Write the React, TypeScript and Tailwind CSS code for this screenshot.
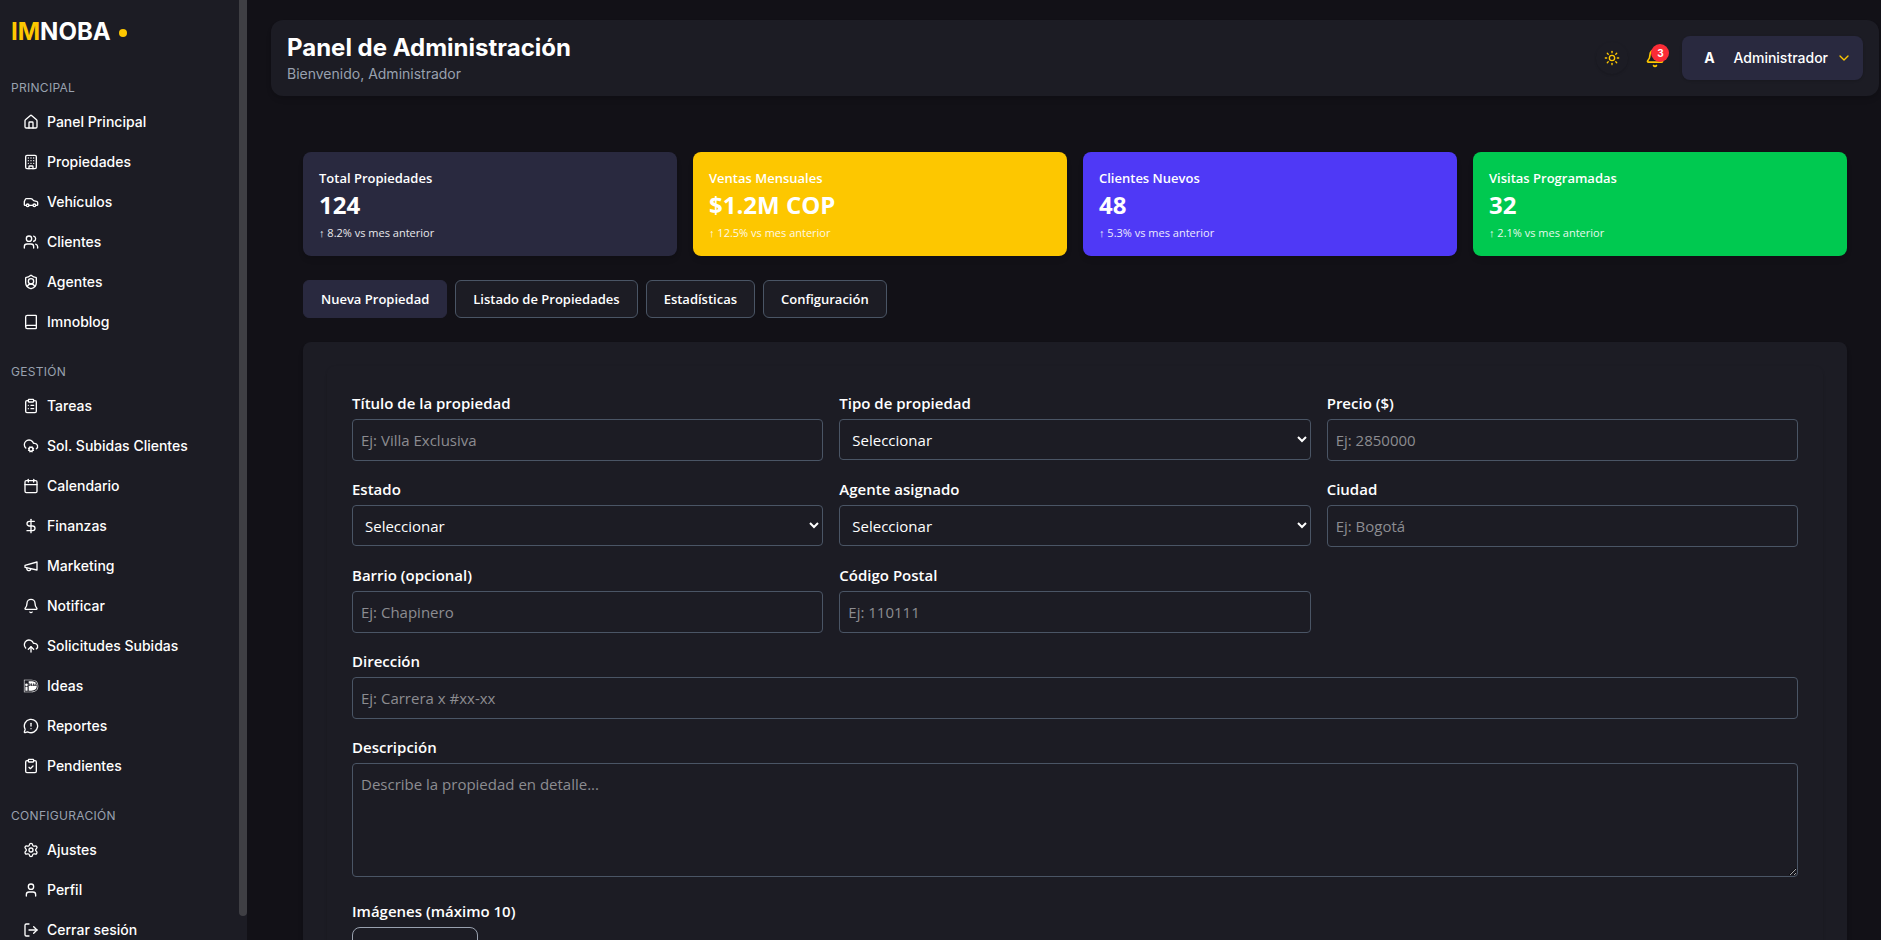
import React from "react";
import {
  House, Building, Car, Users, ShieldUser, Book, ClipboardList, CloudCog, Calendar, DollarSign,
  Bell, CloudUpload, MessageCircleWarning, ClipboardCheck, Settings, User, LogOut, Sun, ChevronDown,
} from "lucide-react";
import { FaIdeal } from "react-icons/fa6";

type IconType = React.ComponentType<{ className?: string }>;

function Megaphone({ className }: { className?: string }) {
  return (
    <svg viewBox="0 0 24 24" fill="none" stroke="currentColor" strokeWidth="2" strokeLinecap="round" strokeLinejoin="round" className={className} aria-hidden="true">
      <path d="m3 11 18-5v12L3 14v-3z" />
      <path d="M11.6 16.8a3 3 0 1 1-5.8-1.6" />
    </svg>
  );
}

const sections: { title: string; items: { label: string; icon: IconType }[] }[] = [
  {
    title: "PRINCIPAL",
    items: [
      { label: "Panel Principal", icon: House },
      { label: "Propiedades", icon: Building },
      { label: "Vehículos", icon: Car },
      { label: "Clientes", icon: Users },
      { label: "Agentes", icon: ShieldUser },
      { label: "Imnoblog", icon: Book },
    ],
  },
  {
    title: "GESTIÓN",
    items: [
      { label: "Tareas", icon: ClipboardList },
      { label: "Sol. Subidas Clientes", icon: CloudCog },
      { label: "Calendario", icon: Calendar },
      { label: "Finanzas", icon: DollarSign },
      { label: "Marketing", icon: Megaphone },
      { label: "Notificar", icon: Bell },
      { label: "Solicitudes Subidas", icon: CloudUpload },
      { label: "Ideas", icon: FaIdeal },
      { label: "Reportes", icon: MessageCircleWarning },
      { label: "Pendientes", icon: ClipboardCheck },
    ],
  },
  {
    title: "CONFIGURACIÓN",
    items: [
      { label: "Ajustes", icon: Settings },
      { label: "Perfil", icon: User },
      { label: "Cerrar sesión", icon: LogOut },
    ],
  },
];

const stats = [
  { title: "Total Propiedades", value: "124", delta: "8.2%", color: "bg-[#29293f]" },
  { title: "Ventas Mensuales", value: "$1.2M COP", delta: "12.5%", color: "bg-[#fdc700]" },
  { title: "Clientes Nuevos", value: "48", delta: "5.3%", color: "bg-[#4f39f6]" },
  { title: "Visitas Programadas", value: "32", delta: "2.1%", color: "bg-[#00c950]" },
];

const tabs = ["Nueva Propiedad", "Listado de Propiedades", "Estadísticas", "Configuración"];

function Sidebar() {
  return (
    <aside className="flex w-[247px] shrink-0 overflow-hidden bg-[#1c1c24] font-[Inter,sans-serif]">
      <div className="min-w-0 flex-1 px-[11px] py-4">
        <div className="mb-8 flex items-center gap-2 text-2xl font-bold text-white">
          <span><span className="text-[#fdc700]">IM</span>NOBA</span>
          <span className="mt-0.5 size-2 rounded-full bg-[#fdc700]" />
        </div>
        <nav className="flex flex-col gap-6">
          {sections.map((s) => (
            <div key={s.title}>
              <h2 className="mb-2 text-xs tracking-wide text-[#99a1af]">{s.title}</h2>
              <ul className="flex flex-col gap-1">
                {s.items.map(({ label, icon: Icon }) => (
                  <li key={label}>
                    <a href="#" className="flex h-9 items-center gap-2 rounded-lg px-3 text-sm font-medium text-white">
                      <Icon className="size-4 shrink-0" />
                      {label}
                    </a>
                  </li>
                ))}
              </ul>
            </div>
          ))}
        </nav>
      </div>
      <div className="flex w-2 flex-col">
        <div className="mb-6 flex-1 rounded-b bg-[#3f3f44]" />
      </div>
    </aside>
  );
}

function Header() {
  return (
    <header className="mr-0.5 flex items-center justify-between rounded-xl bg-[#1c1c24] px-4 py-3 font-[Inter,sans-serif] shadow-md">
      <div>
        <h1 className="text-2xl font-bold text-white">Panel de Administración</h1>
        <p className="text-sm text-[#99a1af]">Bienvenido, Administrador</p>
      </div>
      <div className="flex items-center gap-4">
        <button aria-label="Cambiar tema" className="flex size-8 items-center justify-center rounded-full text-[#fdc700] shadow-sm">
          <Sun className="size-4" />
        </button>
        <button aria-label="Notificaciones" className="relative p-px text-[#fdc700]">
          <Bell className="size-5" />
          <span className="absolute -top-[3px] left-[7px] flex size-[18px] items-center justify-center rounded-full bg-[#fb2c36] text-[10px] font-bold text-white">3</span>
        </button>
        <button className="flex h-11 items-center gap-2 rounded-lg bg-[#29293f] px-[11px] text-sm font-medium text-white shadow-sm">
          <span className="w-8 text-center font-bold">A</span>
          Administrador
          <ChevronDown className="size-4 text-[#fdc700]" />
        </button>
      </div>
    </header>
  );
}

const fieldClass = "block w-full rounded border border-[#4a5565] bg-transparent p-2 text-[15px] leading-6 text-white placeholder:text-[#8c8c91]";

function Field({ id, label, wide, children }: { id: string; label: string; wide?: boolean; children: React.ReactNode }) {
  return (
    <div className={wide ? "col-span-3" : ""}>
      <label htmlFor={id} className="mb-1 block text-[15px] leading-6 font-semibold text-white">{label}</label>
      {children}
    </div>
  );
}

function TextField({ id, label, placeholder, wide }: { id: string; label: string; placeholder: string; wide?: boolean }) {
  return (
    <Field id={id} label={label} wide={wide}>
      <input id={id} type="text" placeholder={placeholder} className={fieldClass} />
    </Field>
  );
}

function SelectField({ id, label }: { id: string; label: string }) {
  return (
    <Field id={id} label={label}>
      <select id={id} className="block h-[41px] w-full rounded border border-[#4a5565] bg-[#1c1c24] p-2 text-[15px] text-white">
        <option>Seleccionar</option>
      </select>
    </Field>
  );
}

export default function App() {
  return (
    <div className="flex h-screen overflow-hidden bg-[#121117] font-['Open_Sans',sans-serif] text-white">
      <Sidebar />
      <div className="min-w-0 flex-1 overflow-hidden pt-5 pl-6">
        <Header />
        <main className="py-14 pr-[34px] pl-8">
          <section className="grid grid-cols-4 gap-4">
            {stats.map((s) => (
              <article key={s.title} className={`rounded-lg px-4 pt-4 pb-[15px] shadow-md ${s.color}`}>
                <h3 className="text-[13px] leading-5 font-semibold">{s.title}</h3>
                <p className="text-2xl leading-[34px] font-bold">{s.value}</p>
                <p className="mt-[3px] text-[11px] leading-4 opacity-90">↑ {s.delta} vs mes anterior</p>
              </article>
            ))}
          </section>
          <div className="mt-6 flex gap-2">
            {tabs.map((t, i) => (
              <button
                key={t}
                className={
                  i === 0
                    ? "rounded-md border border-[#29293f] bg-[#29293f] px-[17px] py-2 text-[13px] leading-5 font-semibold"
                    : "rounded-md border border-[#4a5565] bg-[#1c1c24] px-[17px] py-2 text-[13px] leading-5 font-semibold"
                }
              >
                {t}
              </button>
            ))}
          </div>
          <section className="mt-6 rounded-lg bg-[#1c1c24] p-6 shadow-md">
            <form className="grid grid-cols-3 gap-4 rounded-lg border border-transparent p-6 shadow-sm">
              <TextField id="titulo" label="Título de la propiedad" placeholder="Ej: Villa Exclusiva" />
              <SelectField id="tipo" label="Tipo de propiedad" />
              <TextField id="precio" label="Precio ($)" placeholder="Ej: 2850000" />
              <SelectField id="estado" label="Estado" />
              <SelectField id="agente" label="Agente asignado" />
              <TextField id="ciudad" label="Ciudad" placeholder="Ej: Bogotá" />
              <TextField id="barrio" label="Barrio (opcional)" placeholder="Ej: Chapinero" />
              <TextField id="postal" label="Código Postal" placeholder="Ej: 110111" />
              <TextField id="direccion" label="Dirección" placeholder="Ej: Carrera x #xx-xx" wide />
              <Field id="descripcion" label="Descripción" wide>
                <textarea id="descripcion" rows={4} placeholder="Describe la propiedad en detalle..." className={`mb-1.5 ${fieldClass}`} />
              </Field>
              <Field id="imagenes" label="Imágenes (máximo 10)" wide>
                <button id="imagenes" type="button" className="h-24 w-[126px] rounded-lg border border-[#99a1af]" />
              </Field>
            </form>
          </section>
        </main>
      </div>
    </div>
  );
}
